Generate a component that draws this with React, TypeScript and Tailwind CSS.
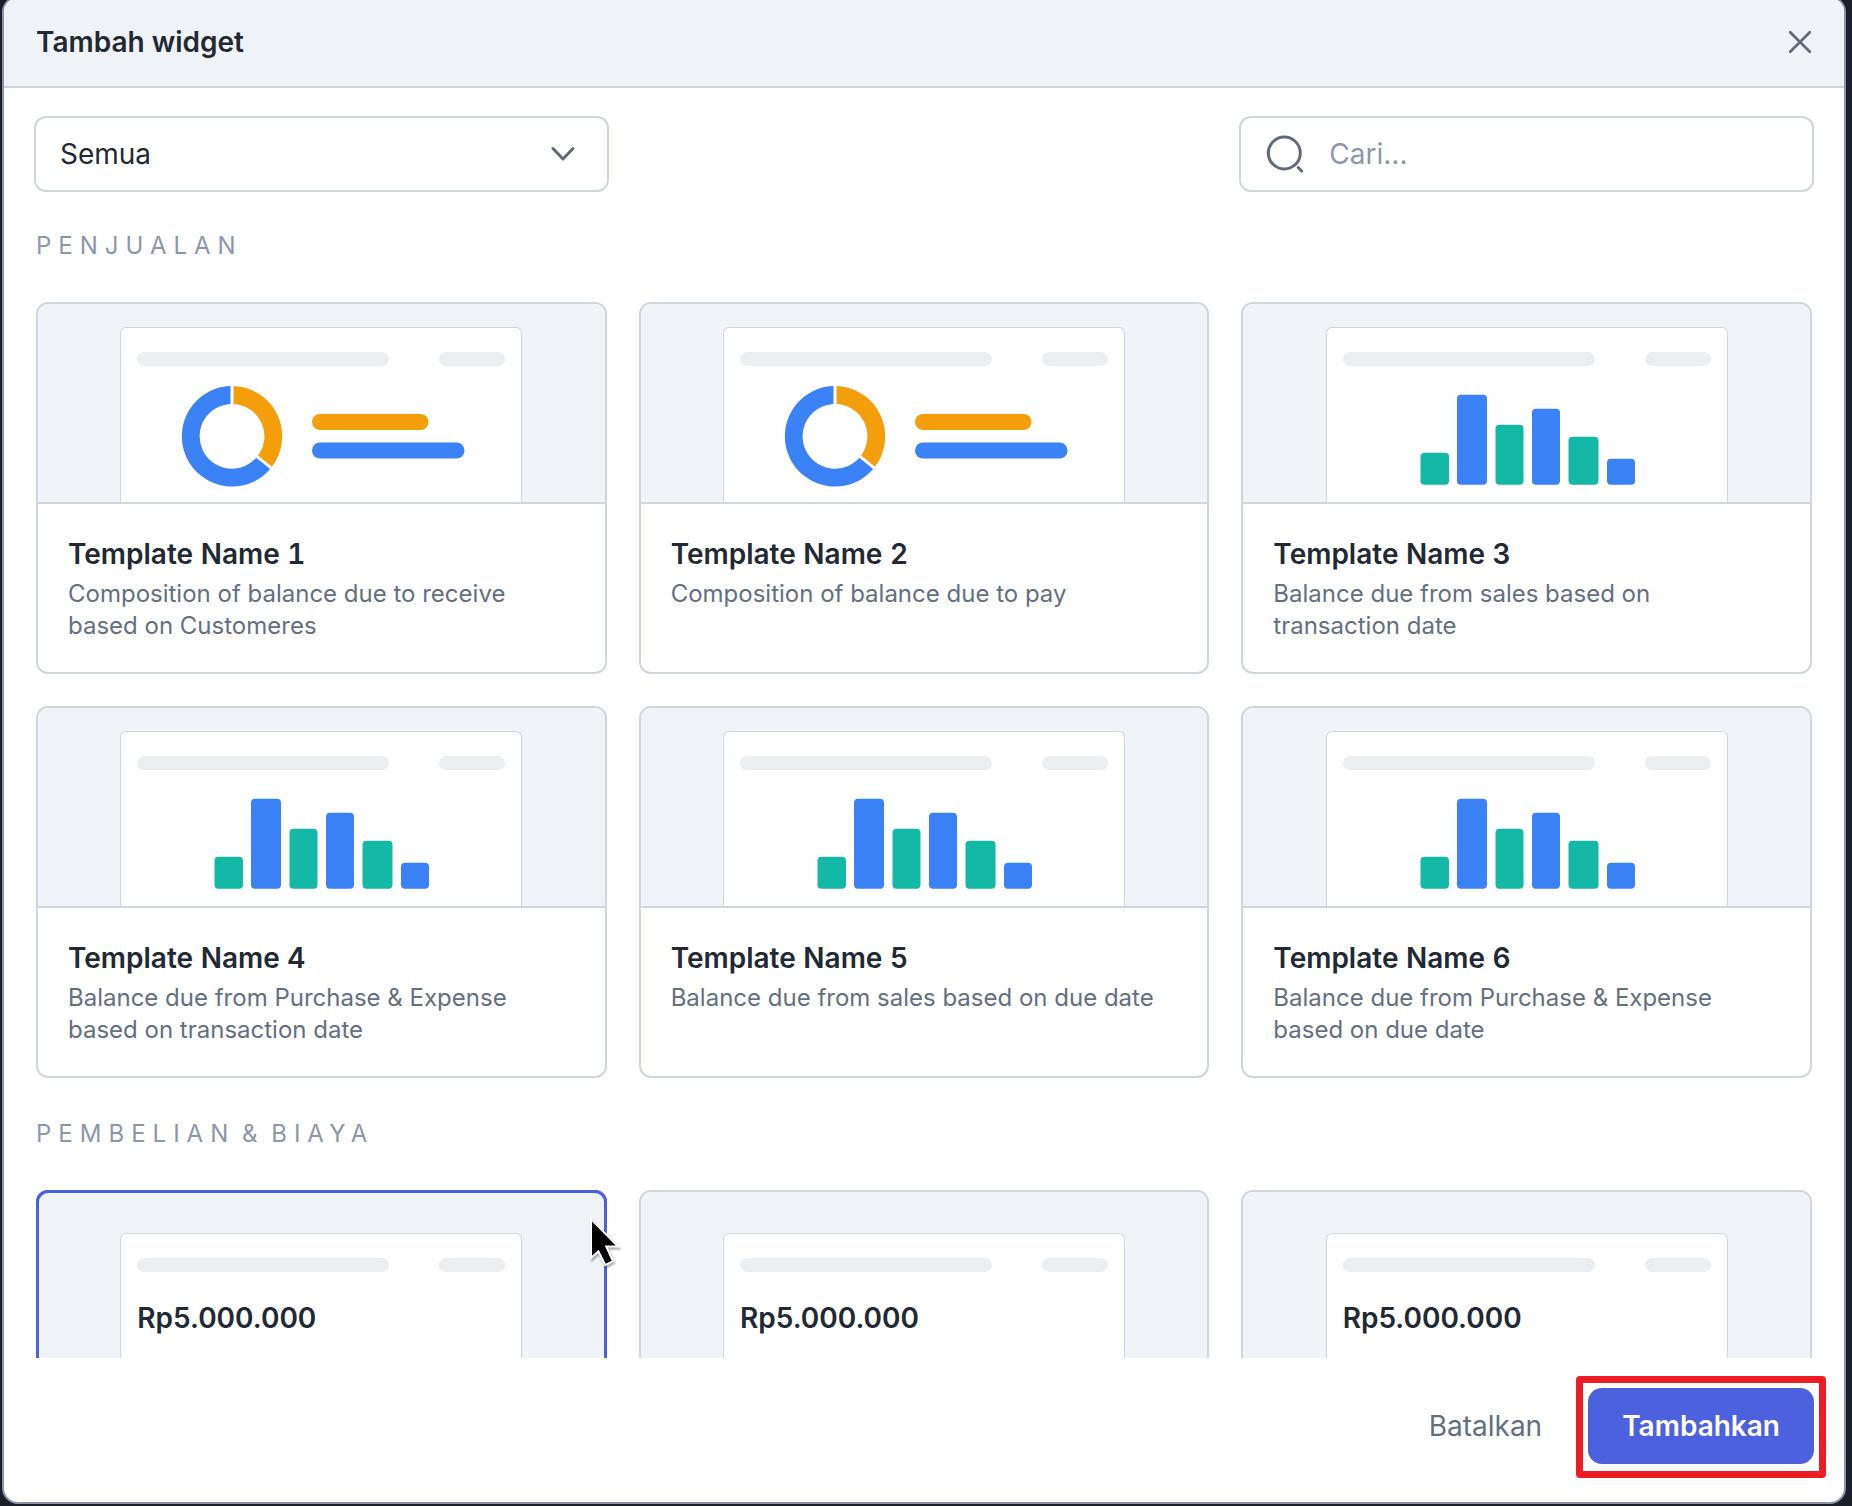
import { Fragment, useState } from 'react'

type Preview = 'donut' | 'bars' | 'amount'
type Template = { id: string; preview: Preview; name?: string; desc?: string }

const SECTIONS: { title: string; items: Template[] }[] = [
  { title: 'PENJUALAN', items: [
    { id: 's1', preview: 'donut', name: 'Template Name 1', desc: 'Composition of balance due to receive based on Customeres' },
    { id: 's2', preview: 'donut', name: 'Template Name 2', desc: 'Composition of balance due to pay' },
    { id: 's3', preview: 'bars', name: 'Template Name 3', desc: 'Balance due from sales based on transaction date' },
    { id: 's4', preview: 'bars', name: 'Template Name 4', desc: 'Balance due from Purchase & Expense based on transaction date' },
    { id: 's5', preview: 'bars', name: 'Template Name 5', desc: 'Balance due from sales based on due date' },
    { id: 's6', preview: 'bars', name: 'Template Name 6', desc: 'Balance due from Purchase & Expense based on due date' },
  ]},
  { title: 'PEMBELIAN & BIAYA', items: [
    { id: 'p1', preview: 'amount' },
    { id: 'p2', preview: 'amount' },
    { id: 'p3', preview: 'amount' },
  ]},
]

const BARS = [
  { x: 93.5, w: 28.5, y: 86.8, color: '#14b8a6' },
  { x: 130, w: 30, y: 28.8, color: '#3b82f6' },
  { x: 168.5, w: 28, y: 58.8, color: '#14b8a6' },
  { x: 205, w: 28, y: 42.8, color: '#3b82f6' },
  { x: 241.5, w: 30, y: 70.8, color: '#14b8a6' },
  { x: 280, w: 28, y: 92.8, color: '#3b82f6' },
]

function DonutChart() {
  return (
    <svg viewBox="0 0 400 136" className="block w-full" aria-hidden="true">
      <path d="M143.1 96.3 A41.3 41.3 0 1 1 111 29" fill="none" stroke="#3b82f6" strokeWidth="17.8" />
      <path d="M111 29 A41.3 41.3 0 0 1 143.1 96.3" fill="none" stroke="#f59e0b" strokeWidth="17.8" />
      <path d="M111 17 V42 M133.1 88.2 L153.5 104.7" stroke="#fff" strokeWidth="3" />
      <rect x="191" y="48" width="116.5" height="16" rx="8" fill="#f59e0b" />
      <rect x="191" y="76.5" width="152.5" height="16" rx="8" fill="#3b82f6" />
    </svg>
  )
}

function BarChart() {
  return (
    <svg viewBox="0 0 400 136" className="block w-full" aria-hidden="true">
      {BARS.map(b => <rect key={b.x} x={b.x} y={b.y} width={b.w} height={118.8 - b.y} rx="4" fill={b.color} />)}
    </svg>
  )
}

function Cursor() {
  return (
    <svg viewBox="0 0 34 54" className="absolute top-6 -right-3 w-[34px] h-[54px] overflow-visible drop-shadow-[1px_2px_1px_rgba(0,0,0,0.35)]" aria-hidden="true">
      <path d="M7 7.5 V41.7 L13.7 35.7 L20.7 49.7 L26.7 46.7 L19.7 31.4 H30.7 Z" fill="#000" stroke="#fff" strokeWidth="4" paintOrder="stroke" />
    </svg>
  )
}

// letters are spread out, the spaces between words are not
function SectionTitle({ title }: { title: string }) {
  return (
    <h2 className="my-10 text-2xl leading-8 text-[#8d97aa]">
      {title.split(' ').map((word, i) => (
        <Fragment key={word}>{i > 0 && ' '}<span className="tracking-[7px]">{word}</span></Fragment>
      ))}
    </h2>
  )
}

function TemplateCard({ item, selected, onSelect }: { item: Template; selected: boolean; onSelect: () => void }) {
  const amount = item.preview === 'amount'
  return (
    <div className="relative">
      <button type="button" aria-pressed={selected} onClick={onSelect}
        className={`flex flex-col w-full text-left bg-white border-2 rounded-xl overflow-hidden ${selected ? 'border-[#4c61dd] outline-3 -outline-offset-3 outline-[#4c61dd]' : 'border-[#cfd6df]'}`}>
        <span className={`flex justify-center w-full bg-[#f0f3f8] border-b-2 border-[#cfd6df] ${amount ? 'pt-[41px]' : 'pt-[23px]'}`}>
          <span className="block w-[402px] bg-white border border-b-0 border-[#cfd6df] rounded-t-md">
            <span className="flex justify-between px-4 pt-6">
              <span className="w-[252px] h-3.5 rounded-full bg-[#ebeff2]" />
              <span className="w-[66px] h-3.5 rounded-full bg-[#ebeff2]" />
            </span>
            {item.preview === 'donut' && <DonutChart />}
            {item.preview === 'bars' && <BarChart />}
            {amount && <span className="block px-4 pt-7 pb-16 text-[28px] leading-9 font-semibold text-[#232933]">Rp5.000.000</span>}
          </span>
        </span>
        {item.name && (
          <span className="block px-[30px] pt-8 pb-[30px]">
            <span className="block text-[28px] leading-9 font-semibold tabular-nums text-[#232933]">{item.name}</span>
            <span className="block mt-1.5 min-h-16 text-2xl leading-8 text-[#646f80]">{item.desc}</span>
          </span>
        )}
      </button>
      {selected && <Cursor />}
    </div>
  )
}

export default function App() {
  const [selected, setSelected] = useState('p1')
  const [query, setQuery] = useState('')

  return (
    <div className="h-screen overflow-hidden flex flex-col bg-[#1b1f29] pl-0.5 pr-1.5 pb-0.5 font-['Inter',sans-serif] text-[#232933]">
      <div role="dialog" aria-labelledby="title" className="flex-1 min-h-0 -mt-1 flex flex-col bg-white border-2 border-[#8a94a8] rounded-2xl overflow-hidden">
        <header className="flex items-center justify-between h-[90px] shrink-0 px-8 bg-[#f0f3f8] border-b-2 border-[#cfd6df]">
          <h1 id="title" className="text-[28px] leading-9 font-semibold">Tambah widget</h1>
          <button type="button" aria-label="Tutup">
            <svg viewBox="0 0 24 24" className="w-6 h-6" fill="none" stroke="#5f6b7c" strokeWidth="2.75" strokeLinecap="round">
              <path d="M2.2 2.2 L21.8 21.8 M21.8 2.2 L2.2 21.8" />
            </svg>
          </button>
        </header>

        <div className="flex-1 min-h-0 overflow-hidden px-8">
          <div className="grid grid-cols-3 gap-8 pt-[30px]">
            <div className="relative">
              <select aria-label="Kategori" className="appearance-none w-full h-[72px] px-6 bg-white rounded-[10px] ring-2 ring-[#cfd6df] text-[28px] leading-9 outline-none">
                <option>Semua</option>
              </select>
              <svg viewBox="0 0 24 16" className="absolute right-8 top-7 w-6 h-4 pointer-events-none" fill="none" stroke="#5f6b7c" strokeWidth="3" strokeLinecap="round" strokeLinejoin="round">
                <path d="M2 2.5 L12 13 L22 2.5" />
              </svg>
            </div>
            <label className="col-start-3 flex items-center gap-6 h-[72px] px-6 bg-white rounded-[10px] ring-2 ring-[#cfd6df]">
              <svg viewBox="0 0 40 40" className="w-10 h-10 shrink-0" fill="none" stroke="#5f6b7c" strokeWidth="3" strokeLinecap="round">
                <circle cx="19.3" cy="19" r="16" />
                <path d="M33.2 33.5 L36.7 37" />
              </svg>
              <input type="text" aria-label="Cari" placeholder="Cari..." value={query} onChange={e => setQuery(e.target.value)}
                className="flex-1 min-w-0 text-[28px] leading-9 placeholder:text-[#8d97aa] outline-none" />
            </label>
          </div>

          {SECTIONS.map(section => (
            <section key={section.title}>
              <SectionTitle title={section.title} />
              <div className="grid grid-cols-3 gap-8">
                {section.items.map(item => (
                  <TemplateCard key={item.id} item={item} selected={selected === item.id} onSelect={() => setSelected(item.id)} />
                ))}
              </div>
            </section>
          ))}
        </div>

        <footer className="flex items-center justify-end gap-4 shrink-0 px-8 pt-8 pb-10">
          <button type="button" className="h-[72px] px-8 text-[28px] leading-9 text-[#646f80]">Batalkan</button>
          <div className="relative">
            <button type="button" className="h-[72px] px-8 rounded-xl bg-[#4c61dd] ring-2 ring-[#4c61dd] text-[28px] leading-9 font-semibold text-white">Tambahkan</button>
            <div className="absolute -inset-x-3.5 -top-3.5 -bottom-4 border-7 border-[#ee1c25] rounded-sm pointer-events-none" />
          </div>
        </footer>
      </div>
    </div>
  )
}
